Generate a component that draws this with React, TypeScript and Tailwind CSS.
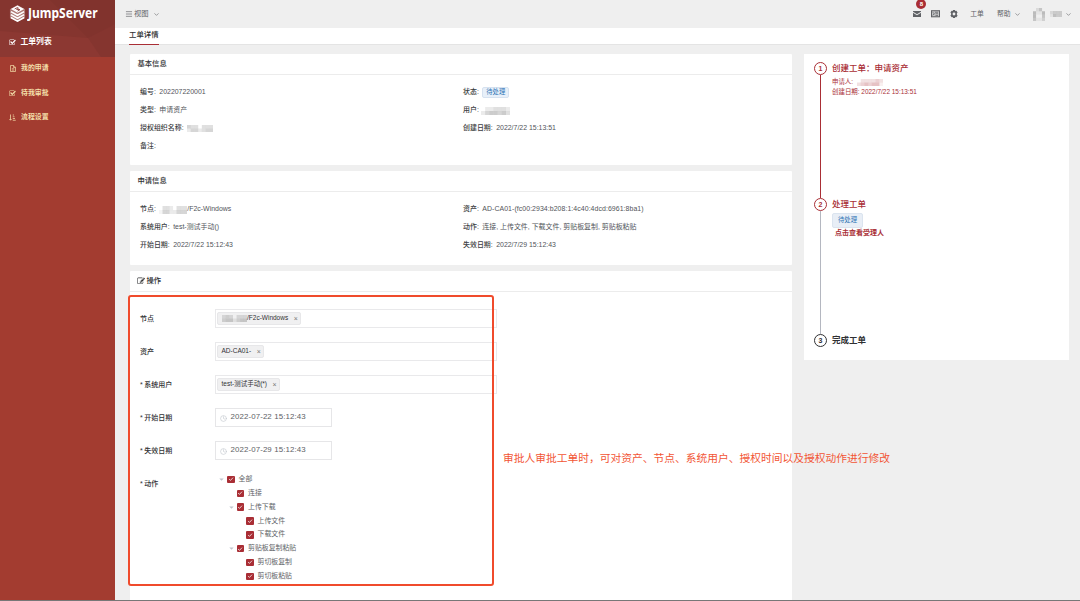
import type { ReactNode } from "react";
import clsx from "clsx";
import { ChevronDown, Clock, Menu } from "lucide-react";

const CHECK_SQUARE =
  "M1472 930v318q0 119-84.5 203.5t-203.5 84.5h-832q-119 0-203.5-84.5t-84.5-203.5v-832q0-119 84.5-203.5t203.5-84.5h832q63 0 117 25 15 7 18 23 3 17-9 29l-49 49q-10 10-23 10-3 0-9-2-23-6-45-6h-832q-66 0-113 47t-47 113v832q0 66 47 113t113 47h832q66 0 113-47t47-113v-254q0-13 9-22l64-64q10-10 23-10 6 0 12 3 20 8 20 29zm231-489l-814 814q-24 24-57 24t-57-24l-430-430q-24-24-24-57t24-57l110-110q24-24 57-24t57 24l263 263 647-647q24-24 57-24t57 24l110 110q24 24 24 57t-24 57z";
const EDIT =
  "M888 1184l116-116-152-152-116 116v56h96v96h56zm440-720q-16-16-33 1l-350 350q-17 17-1 33t33-1l350-350q17-17 1-33zm80 594v190q0 119-84.5 203.5t-203.5 84.5h-832q-119 0-203.5-84.5t-84.5-203.5v-832q0-119 84.5-203.5t203.5-84.5h832q63 0 117 25 15 7 18 23 3 17-9 29l-49 49q-14 14-32 8-23-6-45-6h-832q-66 0-113 47t-47 113v832q0 66 47 113t113 47h832q66 0 113-47t47-113v-126q0-13 9-22l64-64q15-15 35-7t20 29zm-96-738l288 288-672 672h-288v-288zm444 132l-92 92-288-288 92-92q28-28 68-28t68 28l152 152q28 28 28 68t-28 68z";

function Glyph({ d, className }: { d: string; className: string }) {
  return (
    <svg viewBox="0 0 1792 1792" fill="currentColor" className={className}>
      <path d={d} />
    </svg>
  );
}

/** Masked value, drawn as a row of coarse pixels. Each digit is an opacity step. */
function Mosaic({ rows, className }: { rows: string[]; className?: string }) {
  const cols = rows[0].length;
  return (
    <svg
      viewBox={`0 0 ${cols} ${rows.length}`}
      preserveAspectRatio="none"
      fill="currentColor"
      className={className}
    >
      {rows.map((row, y) =>
        row
          .split("")
          .map((step, x) => (
            <rect key={`${x}-${y}`} x={x} y={y} width="1.02" height="1.02" opacity={Number(step) / 10} />
          )),
      )}
    </svg>
  );
}

function Logo() {
  return (
    <svg viewBox="0 0 18 20" className="h-[19px] w-[17px]" fill="none">
      <path d="M9 1l8 4.5v9L9 19l-8-4.5v-9z" fill="#fff" opacity="0.35" />
      <path d="M9 1.6l7 3.7-7 3.9-7-3.9z" fill="#fff" />
      <path d="M6 5.2l3-1.5 1 .7-2 1.2 3.6.3-2.6 1.6" stroke="#873630" strokeWidth="0.9" />
      <path
        d="M2 8l7 3.9L16 8M2 11.2l7 3.9 7-3.9M2 14.2l7 3.9 7-3.9"
        stroke="#fff"
        strokeWidth="1.7"
      />
    </svg>
  );
}

function FileIcon() {
  return (
    <svg viewBox="0 0 12 14" className="ml-[0.5px] h-[7px] w-[6px]" fill="none" stroke="currentColor" strokeWidth="1.4">
      <path d="M1 1h6.5L11 4.500V13H1zM7 1v4h4M3.500 7.500h5M3.500 10.200h5" />
    </svg>
  );
}

function SortIcon() {
  return (
    <svg viewBox="0 0 14 14" className="h-[7px] w-[7px]" fill="none" stroke="currentColor" strokeWidth="1.5">
      <path d="M3 1v11M.8 10L3 12.500 5.200 10M7.500 2h2.500M7.500 5.500h3.500M7.500 9h4.500M7.500 12.500h6" />
    </svg>
  );
}

const MENU = [
  { label: "我的申请", icon: <FileIcon /> },
  { label: "待我审批", icon: <Glyph d={CHECK_SQUARE} className="size-[7px]" /> },
  { label: "流程设置", icon: <SortIcon /> },
];

function Sidebar() {
  return (
    <aside className="flex w-[115px] shrink-0 flex-col bg-[#a33c30]">
      <div className="relative h-[57px] overflow-hidden bg-[#85352f]">
        <svg viewBox="0 0 115 57" className="absolute inset-0 h-full w-full">
          <path d="M0 31L88 38 101 57H0z" fill="#8c3832" />
          <path d="M50 0h65v24L88 38z" fill="#7e322d" opacity="0.6" />
        </svg>
        <div className="relative flex h-[27px] items-center pl-[9px]">
          <Logo />
          <span className="ml-[1.500px] origin-left scale-x-[0.89] font-['Noto_Sans'] text-[13.5px] leading-none font-bold text-white">
            JumpServer
          </span>
        </div>
        <div className="relative mt-[5px] flex h-5 items-center pl-[9px] text-white">
          <Glyph d={CHECK_SQUARE} className="size-[7px]" />
          <span className="ml-[4.500px] text-[7.8px] font-bold">工单列表</span>
        </div>
      </div>
      <nav className="-mt-[0.5px] text-[#f3dfa9]">
        {MENU.map((item) => (
          <a key={item.label} className="flex h-[24.5px] items-center pl-[9px]">
            <span className="flex w-[12px]">{item.icon}</span>
            <span className="text-[6.9px] font-bold">{item.label}</span>
          </a>
        ))}
      </nav>
    </aside>
  );
}

function TopBar() {
  return (
    <header className="flex h-7 shrink-0 items-center bg-[#efefef] pr-[8px] pl-[10px] text-[#606266]">
      <Menu className="size-[8px]" strokeWidth={2} />
      <span className="ml-px text-[7.3px]">视图</span>
      <ChevronDown className="ml-[4px] size-[7px]" strokeWidth={2} />
      <div className="ml-auto flex items-center">
        <div className="relative">
          <svg viewBox="0 0 16 12" className="h-[6px] w-[8px]" fill="currentColor">
            <path d="M0 0h16v1.500L8 6.500 0 1.500z" />
            <path d="M0 3.300l8 5 8-5V12H0z" />
          </svg>
          <span className="absolute -top-[12px] left-[3.500px] flex h-[10px] w-[10px] items-center justify-center rounded-full bg-[#a92e35] text-[6px] font-bold text-white">
            8
          </span>
        </div>
        <svg viewBox="0 0 18 14" className="ml-[10px] h-[7.500px] w-[9px]" fill="none" stroke="currentColor">
          <rect x="0" y="0" width="18" height="14" fill="currentColor" stroke="none" opacity="0.3" />
          <rect x="1" y="1" width="16" height="12" strokeWidth="2" />
          <path d="M3 4l4 3-4 3M9 10.500h5M8 4h6M9 7h5" strokeWidth="1.500" />
        </svg>
        <svg viewBox="0 0 16 16" className="ml-[10.500px] size-[8px]">
          <path
            fill="currentColor"
            fillRule="evenodd"
            d="M6 0h4l.6 2.200 2.200-.6 2.400 3.200L13.800 6.500v3l1.400 1.700-2.400 3.200-2.200-.6L10 16H6l-.6-2.200-2.200.6-2.400-3.200L2.200 9.500v-3L.8 4.800l2.400-3.200 2.200.6zM8 5.200a2.800 2.800 0 100 5.600 2.800 2.800 0 000-5.600z"
          />
        </svg>
        <span className="ml-[12px] text-[6.8px]">工单</span>
        <span className="ml-[13px] text-[6.8px]">帮助</span>
        <ChevronDown className="ml-[3px] size-[7px]" strokeWidth={2} />
        <Mosaic rows={["0240", "5115", "5004", "4113"]} className="ml-[12px] h-[13px] w-[12px] text-[#888]" />
        <Mosaic rows={["2333", "1433"]} className="ml-[5px] h-[6px] w-[12px] text-[#777]" />
        <ChevronDown className="ml-[3.500px] size-[7px]" strokeWidth={2} />
      </div>
    </header>
  );
}

function Card({ title, className, children }: { title: ReactNode; className?: string; children: ReactNode }) {
  return (
    <section className={clsx("rounded-[1px] bg-white", className)}>
      <h2 className="flex h-[21px] items-center border-b border-[#ececec] pl-[8px] text-[7.3px] font-medium text-[#303133]">
        {title}
      </h2>
      {children}
    </section>
  );
}

function Info({ label, children }: { label: string; children?: ReactNode }) {
  return (
    <div className="flex h-[18px] items-center whitespace-nowrap">
      <span className="mr-[3.500px] font-medium text-[#3c3e42]">{label}:</span>
      {children}
    </div>
  );
}

function Field({ label, required, children }: { label: string; required?: boolean; children: ReactNode }) {
  return (
    <div className="flex h-[33px]">
      <div className="flex h-[19px] w-[74.500px] items-center text-[7px] font-medium text-[#303133]">
        {required && <span className="mr-[1.500px]">*</span>}
        {label}
      </div>
      {children}
    </div>
  );
}

function TagInput({ children }: { children: ReactNode }) {
  return (
    <div className="flex h-[19px] w-[282.500px] items-center border border-[#e9e9eb] pl-[1.500px]">
      <span className="flex h-[13px] items-center rounded-[2px] border border-[#e7e7e9] bg-[#f0f0f1] pr-[2.500px] pl-[3.500px] text-[6.500px] text-[#303133]">
        {children}
        <span className="ml-[5.500px] text-[7px] text-[#777]">×</span>
      </span>
    </div>
  );
}

function DateInput({ value }: { value: string }) {
  return (
    <div className="flex h-[19px] w-[117.500px] items-center border border-[#e6e6e8] pl-[4.500px]">
      <Clock className="mt-[3px] size-[7px] text-[#c0c4cc]" strokeWidth={2} />
      <span className="ml-[3.500px] text-[7.900px] tracking-[0.100px] text-[#606266]">{value}</span>
    </div>
  );
}

const ACTIONS = [
  { label: "全部", depth: 0, open: true },
  { label: "连接", depth: 1 },
  { label: "上传下载", depth: 1, open: true },
  { label: "上传文件", depth: 2 },
  { label: "下载文件", depth: 2 },
  { label: "剪贴板复制粘贴", depth: 1, open: true },
  { label: "剪切板复制", depth: 2 },
  { label: "剪切板粘贴", depth: 2 },
];
const INDENT = ["pl-0", "pl-[9.500px]", "pl-[19px]"];

function ActionTree() {
  return (
    <div className="-mt-[1px] pl-[4.500px]">
      {ACTIONS.map(({ label, depth, open }) => (
        <div key={label} className={clsx("flex h-[13.850px] items-center", INDENT[depth])}>
          <svg viewBox="0 0 8 8" className={clsx("mr-[3px] size-[5px]", !open && "invisible")}>
            <path d="M0.500 2.500h7L4 6z" fill="#c0c4cc" />
          </svg>
          <span className="flex size-[7.500px] items-center justify-center rounded-[1px] bg-[#a92e35]">
            <svg viewBox="0 0 8 8" className="size-[6px]" fill="none" stroke="#fff">
              <path d="M1.500 4l1.800 1.900L6.700 2.200" />
            </svg>
          </span>
          <span className="ml-[4px] text-[6.900px] text-[#606266]">{label}</span>
        </div>
      ))}
    </div>
  );
}

function Step({
  index,
  title,
  done,
  last,
  active,
  children,
}: {
  index: number;
  title: string;
  done?: boolean;
  last?: boolean;
  active?: boolean;
  children?: ReactNode;
}) {
  return (
    <li className={clsx("flex", active ? "text-[#a92e35]" : "text-[#303133]", !last && "h-[136.200px]")}>
      <div className="flex w-[13px] flex-col items-center">
        <span className="flex size-[13px] shrink-0 items-center justify-center rounded-full border border-current text-[7px] font-bold">
          {index}
        </span>
        {!last && <span className={clsx("flex-1", done ? "w-[1.500px] bg-[#a92e35]" : "w-px bg-[#b4b7c0]")} />}
      </div>
      <div className="ml-[5px]">
        <h3 className={clsx("h-[13px] text-[8.500px] leading-[13px]", last ? "font-bold" : "font-medium")}>{title}</h3>
        {children}
      </div>
    </li>
  );
}

export default function App() {
  return (
    <div className="relative flex h-[601px] w-[1080px] overflow-hidden bg-[#efefef] font-['Liberation_Sans','Noto_Sans_CJK_SC',sans-serif] text-[7px] leading-none">
      <Sidebar />
      <div className="flex min-w-0 flex-1 flex-col">
        <TopBar />
        <div className="flex h-[17px] shrink-0 border-b border-[#e4e4e4] bg-white pl-[14px]">
          <span className="flex h-[17px] items-center border-b border-[#a92e35] pb-[3px] text-[7.400px] font-medium text-[#303133]">
            工单详情
          </span>
        </div>
        <div className="flex flex-1 items-start pt-[9px] pl-[14.500px]">
          <main className="flex w-[662px] flex-col gap-[6px] text-[6.950px] text-[#515459]">
            <Card title="基本信息" className="h-[111px]">
              <div className="grid grid-cols-[323px_1fr] pt-[8.500px] pl-[10.500px]">
                <div>
                  <Info label="编号">202207220001</Info>
                  <Info label="类型">申请资产</Info>
                  <Info label="授权组织名称">
                    <Mosaic rows={["4330333", "2442344"]} className="h-[7px] w-[26px] text-[#999]" />
                  </Info>
                  <Info label="备注" />
                </div>
                <div>
                  <Info label="状态">
                    <span className="flex h-[11px] items-center rounded-[2px] border border-[#d6e2f0] bg-[#e8f0f9] px-[3px] text-[6.300px] text-[#2f74b5]">
                      待处理
                    </span>
                  </Info>
                  <Info label="用户">
                    <Mosaic rows={["0223332", "2455453"]} className="-ml-px h-[8px] w-[29px] text-[#999]" />
                  </Info>
                  <Info label="创建日期">2022/7/22 15:13:51</Info>
                </div>
              </div>
            </Card>

            <Card title="申请信息" className="h-[94px]">
              <div className="grid grid-cols-[323px_1fr] pt-[8.500px] pl-[10.500px]">
                <div>
                  <Info label="节点">
                    <Mosaic rows={["03320333", "14422444"]} className="h-[8px] w-[28px] text-[#999]" />
                    /F2c-Windows
                  </Info>
                  <Info label="系统用户">test-测试手动()</Info>
                  <Info label="开始日期">2022/7/22 15:12:43</Info>
                </div>
                <div>
                  <Info label="资产">
                    <span className="tracking-[0.060px]">AD-CA01-(fc00:2934:b208:1:4c40:4dcd:6961:8ba1)</span>
                  </Info>
                  <Info label="动作">连接, 上传文件, 下载文件, 剪贴板复制, 剪贴板粘贴</Info>
                  <Info label="失效日期">2022/7/29 15:12:43</Info>
                </div>
              </div>
            </Card>

            <Card
              className="h-[330px]"
              title={
                <>
                  <Glyph d={EDIT} className="-ml-px mr-[2px] size-[8px]" />
                  操作
                </>
              }
            >
              <div className="pt-[16.500px] pl-[10.500px]">
                <Field label="节点">
                  <TagInput>
                    <Mosaic rows={["3430333", "4552455"]} className="h-[7px] w-[25.500px] text-[#999]" />
                    /F2c-Windows
                  </TagInput>
                </Field>
                <Field label="资产">
                  <TagInput>AD-CA01-</TagInput>
                </Field>
                <Field label="系统用户" required>
                  <TagInput>test-测试手动(*)</TagInput>
                </Field>
                <Field label="开始日期" required>
                  <DateInput value="2022-07-22 15:12:43" />
                </Field>
                <Field label="失效日期" required>
                  <DateInput value="2022-07-29 15:12:43" />
                </Field>
                <Field label="动作" required>
                  <ActionTree />
                </Field>
              </div>
            </Card>
          </main>

          <ol className="ml-[12.500px] h-[306px] w-[265px] bg-white pt-[8px] pl-[10px]">
            <Step index={1} title="创建工单：申请资产" active done>
              <div className="mt-[2px] flex h-[10px] items-center text-[6.400px]">
                申请人:
                <Mosaic rows={["0222232", "2343441"]} className="ml-[4px] h-[7px] w-[26px] text-[#c0676c]" />
              </div>
              <div className="flex h-[11px] items-center text-[6.450px]">创建日期: 2022/7/22 15:13:51</div>
            </Step>
            <Step index={2} title="处理工单" active>
              <span className="mt-[1.500px] flex h-[15px] w-[31px] items-center justify-center rounded-[2px] border border-[#dbe4ef] bg-[#e8eef6] text-[6.400px] text-[#2f74b5]">
                待处理
              </span>
              <p className="mt-px ml-[3px] text-[7px] leading-[8px] font-bold">点击查看受理人</p>
            </Step>
            <Step index={3} title="完成工单" last />
          </ol>
        </div>
      </div>

      <div className="absolute top-[295px] left-[128px] h-[291px] w-[366px] rounded-[3px] border-2 border-[#f04b2c]" />
      <p className="absolute top-[452px] left-[503px] text-[10.750px] leading-[13px] whitespace-nowrap text-[#f25535]">
        审批人审批工单时，可对资产、节点、系统用户、授权时间以及授权动作进行修改
      </p>
      <div className="absolute inset-x-0 bottom-0 h-px bg-[#777]" />
    </div>
  );
}
